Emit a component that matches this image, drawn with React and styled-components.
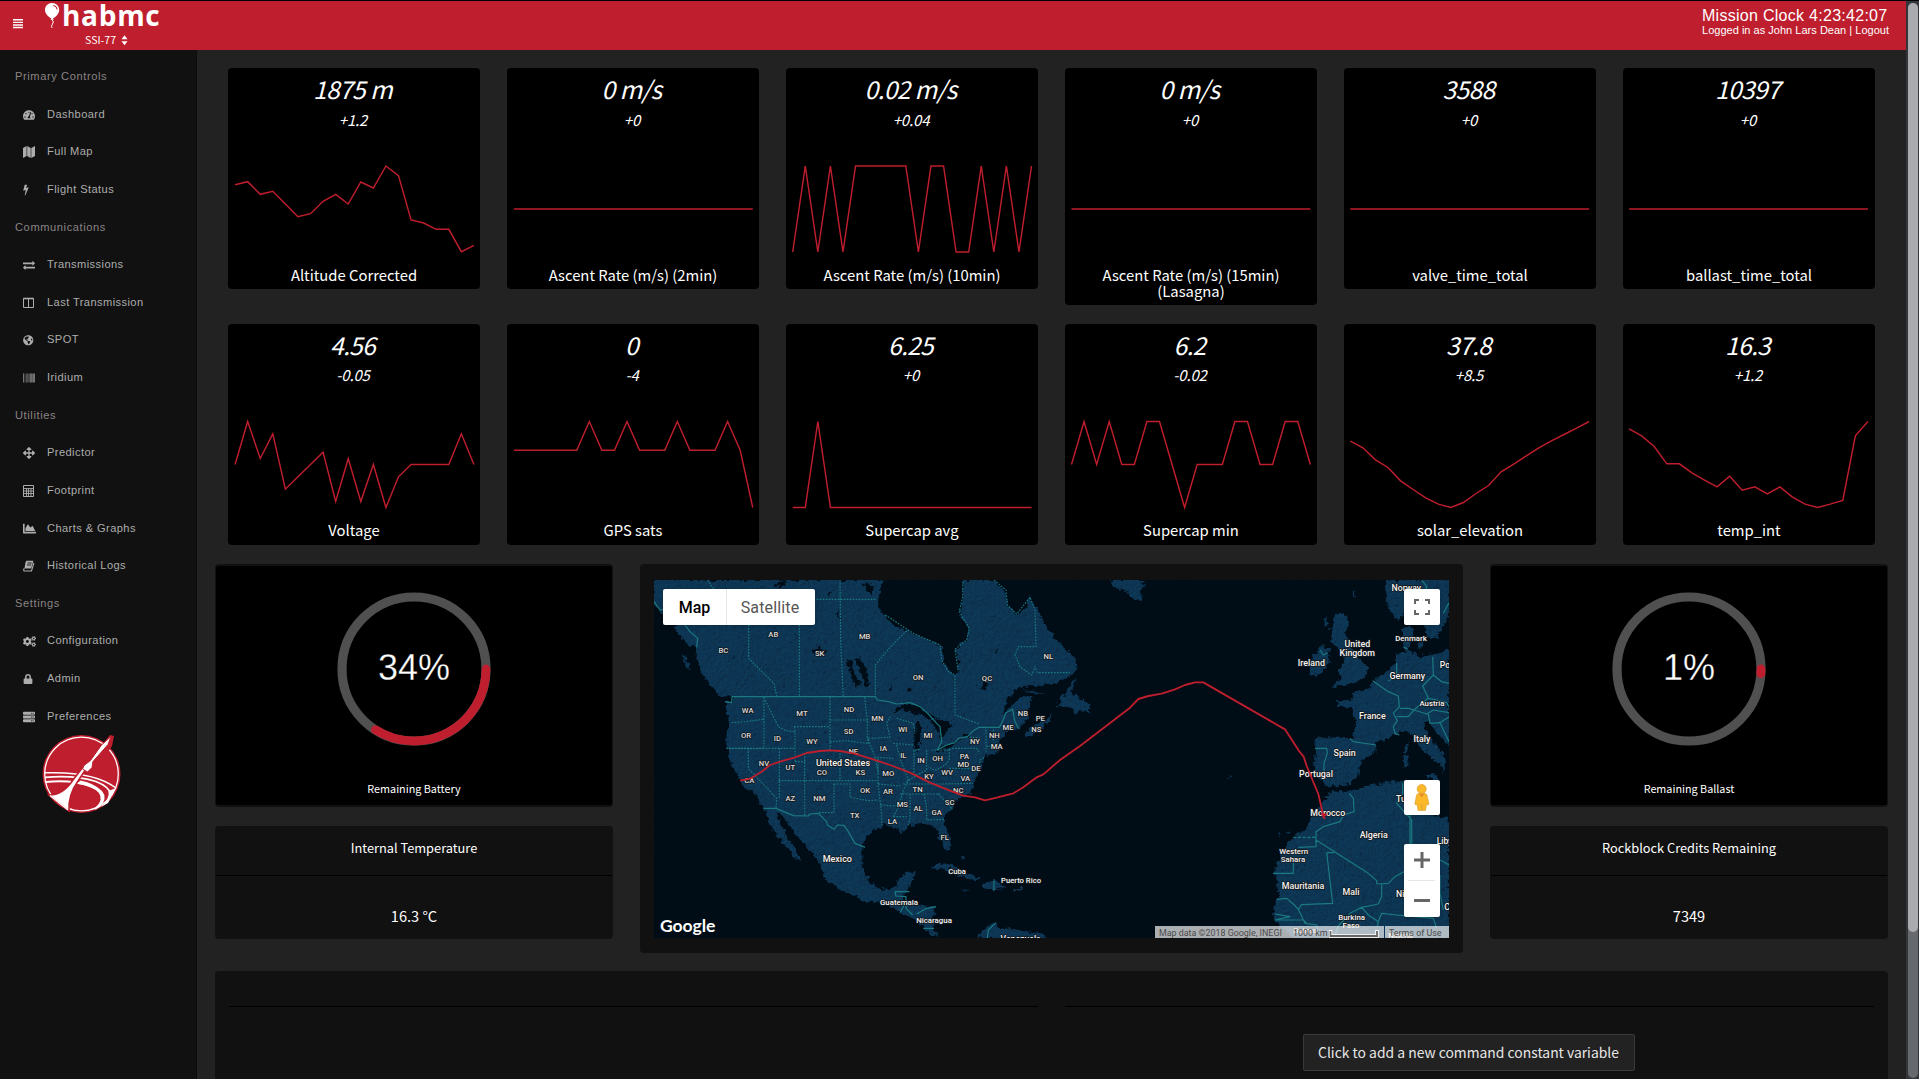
import React from "react";
import styled, { createGlobalStyle } from "styled-components";
import {
  FaTachometerAlt, FaGlobeAmericas, FaBarcode, FaArrowsAlt,
  FaChartArea, FaCogs, FaLock, FaServer,
} from "react-icons/fa";

const sourceSans = `"Noto Sans CJK SC", "Noto Sans", sans-serif`;
const arial = `"Liberation Sans", Arial, sans-serif`;
const red = "#be1e2d";

const GlobalStyle = createGlobalStyle`
  html, body { margin: 0; height: 100%; overflow: hidden; background: #222; }
  body { font-family: ${sourceSans}; color: #fff; }
  *, *::before, *::after { box-sizing: border-box; }
`;

/* ---------- shell ---------- */
const Page = styled.div`
  display: flex;
  height: 1079px;
  overflow: hidden;
  border-top: 1px solid #000;
`;
const Shell = styled.div`
  flex: 1;
  min-width: 0;
  display: flex;
  flex-direction: column;
`;
const ScrollTrack = styled.div`
  width: 13px;
  padding: 2px 1px 1px 2px;
  background: #33373b;
`;
const ScrollGroove = styled.div`
  height: 100%;
  border-radius: 5px;
  background: #66696d;
`;
const ScrollThumb = styled.div`
  height: 929px;
  border-radius: 5px;
  background: #aaabae;
`;
const Header = styled.header`
  height: 49px;
  flex: none;
  display: flex;
  align-items: flex-start;
  background: ${red};
`;
const MenuButton = styled.div`
  padding: 18px 0 0 13px;
  width: 45px;
  svg { display: block; }
`;
const Brand = styled.div`
  display: flex;
  flex-direction: column;
`;
const BrandRow = styled.div`
  display: flex;
  height: 30px;
`;
const BrandName = styled.div`
  margin-left: 1px;
  font: 700 28px/28px "Open Sans", sans-serif;
  letter-spacing: 0.7px;
`;
const Flight = styled.div`
  display: flex;
  align-items: center;
  gap: 5px;
  margin-left: 40px;
  font: 10.6px/18px ${sourceSans};
`;
const Session = styled.div`
  margin-left: auto;
  width: 204px;
  padding-top: 6px;
  font-family: ${arial};
`;
const Clock = styled.div`
  font-size: 16px;
  line-height: 18px;
  letter-spacing: 0.28px;
`;
const Login = styled.div`
  margin-top: -1px;
  font-size: 11px;
  line-height: 12px;
  letter-spacing: 0.02px;
`;
const Body = styled.div`
  flex: 1;
  min-height: 0;
  display: flex;
`;

/* ---------- sidebar ---------- */
const Sidebar = styled.nav`
  width: 197px;
  flex: none;
  padding-top: 8.1px;
  background: #111;
  border-right: 1px solid #0c0c0c;
  font: 11.1px/37.64px ${arial};
`;
const NavHeading = styled.div`
  height: 37.64px;
  padding-left: 15px;
  color: #8a8484;
  letter-spacing: 0.6px;
`;
const NavItem = styled.div`
  display: flex;
  align-items: center;
  height: 37.64px;
  padding-left: 23px;
  color: #adadad;
  letter-spacing: 0.42px;
`;
const NavIcon = styled.span`
  width: 24px;
  display: flex;
  svg { display: block; }
`;
const Emblem = styled.svg`
  display: block;
  margin: 0 0 0 42px;
`;

/* ---------- main ---------- */
const Main = styled.main`
  flex: 1;
  min-width: 0;
  padding: 18px 18px 0;
  overflow: hidden;
  background: #222;
`;
const StatGrid = styled.section`
  display: grid;
  grid-template-columns: repeat(6, 252px);
  column-gap: 27px;
  row-gap: 18.6px;
  align-items: start;
  margin: 0 13px;
`;
const StatCard = styled.article`
  padding: 6.2px 0 6.4px;
  border-radius: 4px;
  background: #000;
  text-align: center;
`;
const StatValue = styled.div`
  padding-right: 3px;
  font: italic 24.5px/30px ${sourceSans};
  letter-spacing: -0.6px;
`;
const StatDelta = styled.div`
  margin-top: 5.4px;
  padding-right: 2px;
  font: italic 15px/20px ${sourceSans};
  letter-spacing: -0.15px;
`;
const Spark = styled.svg`
  display: block;
  margin-bottom: 0.6px;
  polyline { fill: none; stroke: ${red}; stroke-width: 1.45; }
`;
const StatLabel = styled.div`
  padding: 0 20px;
  font: 14.8px/16px ${sourceSans};
`;
const MiddleRow = styled.section`
  display: grid;
  grid-template-columns: 398px 823px 398px;
  column-gap: 27px;
  align-items: start;
  margin-top: 19.4px;
`;
const Column = styled.div`
  display: flex;
  flex-direction: column;
  gap: 19px;
`;
const Panel = styled.div`
  border-radius: 4px;
  background: #111;
`;
const GaugePanel = styled(Panel)`
  height: 243px;
  padding: 2px 1px;
`;
const GaugeFace = styled.div`
  height: 239px;
  display: flex;
  flex-direction: column;
  align-items: center;
  padding-top: 23px;
  border-radius: 2px;
  background: #000;
  text-align: center;
  svg { display: block; }
`;
const GaugeCaption = styled.div`
  margin-top: 31px;
  font: 10.8px/16px ${sourceSans};
`;
const ReadoutPanel = styled(Panel)`
  height: 113px;
  text-align: center;
`;
const ReadoutTitle = styled.div`
  height: 50px;
  margin: 0 1px;
  padding-top: 10px;
  border-bottom: 1px solid #000;
  font: 12.8px/23px ${sourceSans};
`;
const ReadoutValue = styled.div`
  padding-top: 28px;
  font: 14.6px/24px ${sourceSans};
`;
const MapPanel = styled(Panel)`
  height: 389px;
  padding: 16px 14px;
`;
const CommandPanel = styled(Panel)`
  margin-top: 18px;
  height: 200px;
  padding: 35px 14px 0;
  display: grid;
  grid-template-columns: 1fr 1fr;
  column-gap: 27px;
`;
const CommandColumn = styled.div`
  border-top: 1px solid #000;
  padding: 27px 2px 0 0;
  display: flex;
  justify-content: center;
  align-items: flex-start;
`;
const CommandButton = styled.button`
  width: 332px;
  height: 37px;
  padding: 0;
  border: 1px solid #3a3a3a;
  border-radius: 2px;
  background: #222;
  color: #e6e6e6;
  font: 13.9px/34px ${sourceSans};
`;

/* ---------- map ---------- */
const MapFrame = styled.div`
  position: relative;
  height: 358px;
  overflow: hidden;
  background: #010e17;
  > svg { display: block; }
`;
const MapControl = styled.div`
  position: absolute;
  display: flex;
  background: #fff;
  border-radius: 2px;
  box-shadow: 0 1px 4px -1px rgba(0, 0, 0, 0.3);
`;
const TypeControl = styled(MapControl)`
  left: 9px;
  top: 9px;
  font: 16px/37px Roboto, sans-serif;
`;
const TypeButton = styled.div`
  width: ${(p) => p.$width}px;
  height: 36px;
  text-align: center;
  color: ${(p) => (p.$active ? "#000" : "#565656")};
  font-weight: ${(p) => (p.$active ? 500 : 400)};
  letter-spacing: ${(p) => (p.$active ? 0 : 0.15)}px;
  padding-right: ${(p) => (p.$active ? 0 : 2)}px;
  border-left: ${(p) => (p.$active ? "0" : "1px solid #e6e6e6")};
`;
const SideControl = styled(MapControl)`
  right: 9px;
  top: ${(p) => p.$top}px;
  width: 36px;
  height: ${(p) => p.$height}px;
`;
const GoogleMark = styled.div`
  position: absolute;
  left: 6px;
  bottom: 2px;
  color: #fff;
  font: 700 17.6px/20px Lato, sans-serif;
  letter-spacing: -0.1px;
`;
const Credits = styled.div`
  position: absolute;
  right: 0;
  bottom: 0;
  height: 12px;
  display: flex;
  color: #4a4a4a;
  font: 8.9px/15px Roboto, sans-serif;
  white-space: nowrap;
`;
const Credit = styled.div`
  width: ${(p) => p.$width}px;
  padding-left: 4px;
  display: flex;
  gap: 2px;
  background: rgba(245, 245, 245, 0.7);
  margin-left: ${(p) => p.$gap || 0}px;
`;

/* ---------- icons ---------- */
const Glyph = ({ d, box = "0 0 1792 1792", size = 12 }) => (
  <svg width={size} height={size} viewBox={box} fill="currentColor"><path d={d} /></svg>
);
const BoltIcon = () => (
  <svg width="6" height="12" viewBox="0 0 6 12" fill="currentColor">
    <path d="M1.700 .7H4.200L3.100 3.900L5.800 3.300L2.400 11.300H1.700L2.800 6.100L.2 6.700Z" />
  </svg>
);
const ExchangeIcon = () => <Glyph d="M1792 1184v192q0 13-9.500 22.500t-22.500 9.500h-1376v192q0 13-9.500 22.500t-22.500 9.500q-12 0-24-10l-319-320q-9-9-9-22 0-14 9-23l320-320q9-9 23-9 13 0 22.500 9.500t9.500 22.500v192h1376q13 0 22.500 9.500t9.500 22.500zm0-544q0 14-9 23l-320 320q-9 9-23 9-13 0-22.500-9.500t-9.500-22.500v-192h-1376q-13 0-22.500-9.500t-9.500-22.500v-192q0-13 9.500-22.500t22.500-9.500h1376v-192q0-14 9-23t23-9q12 0 24 10l319 319q9 9 9 23z" />;
const MapIcon = () => (
  <svg width="12" height="12" viewBox="0 0 12 12" fill="currentColor">
    <path d="M0 2L3.600 0V10L0 12zM4.200 0L7.700 1.900V12L4.200 10.100zM8.300 2L12 0V10L8.300 12z" />
  </svg>
);
const ColumnsIcon = () => (
  <svg width="12" height="12" viewBox="0 0 12 12" fill="none" stroke="currentColor">
    <path d="M.5 1.500H10.500V10.500H.5zM5.500 2V10.500" /><path d="M.5 1.500H10.500" strokeWidth="1.600" />
  </svg>
);
const CalculatorIcon = () => (
  <svg width="12" height="12" viewBox="0 0 12 12" fill="none" stroke="currentColor">
    <path d="M.5 .5H10.500V11.500H.5z" /><path d="M1 3.500H10M1 6H10M1 8.500H10M3.500 4V11M5.500 4V11M8 4V11" strokeWidth=".9" />
  </svg>
);
const BookIcon = () => (
  <svg width="12" height="12" viewBox="0 0 12 12">
    <path d="M3.400 .8H10.400L8.200 8.600H1.400L2.600 2.200z" fill="currentColor" />
    <path d="M1.300 8.300Q-.1 10.800 1.500 11H8.500L10.900 3" fill="none" stroke="currentColor" strokeWidth="1.100" />
    <path d="M4.500 3H8.700M4 5H8.200" stroke="#111" strokeWidth=".9" />
  </svg>
);

const nav = [
  ["Primary Controls"],
  ["Dashboard", <FaTachometerAlt size={12} />],
  ["Full Map", <MapIcon />],
  ["Flight Status", <BoltIcon />],
  ["Communications"],
  ["Transmissions", <ExchangeIcon />],
  ["Last Transmission", <ColumnsIcon />],
  ["SPOT", <FaGlobeAmericas size={10.500} />],
  ["Iridium", <FaBarcode size={12} />],
  ["Utilities"],
  ["Predictor", <FaArrowsAlt size={12} />],
  ["Footprint", <CalculatorIcon />],
  ["Charts & Graphs", <FaChartArea size={13} />],
  ["Historical Logs", <BookIcon />],
  ["Settings"],
  ["Configuration", <FaCogs size={13} />],
  ["Admin", <FaLock size={10} />],
  ["Preferences", <FaServer size={12} />],
];

/* ---------- stats ---------- */
const flat = Array(20).fill(129);
const stats = [
  ["1875 m", "+1.2", "Altitude Corrected", [56, 47, 85, 76, 114, 152, 143, 106, 85, 114, 48, 66, 0, 29, 162, 171, 190, 190, 257, 238]],
  ["0 m/s", "+0", "Ascent Rate (m/s) (2min)", flat],
  ["0.02 m/s", "+0.04", "Ascent Rate (m/s) (10min)", [258, 0, 258, 0, 258, 0, 0, 0, 0, 0, 258, 0, 0, 258, 258, 0, 258, 0, 258, 0]],
  ["0 m/s", "+0", "Ascent Rate (m/s) (15min) (Lasagna)", flat],
  ["3588", "+0", "valve_time_total", flat],
  ["10397", "+0", "ballast_time_total", flat],
  ["4.56", "-0.05", "Voltage", [129, 0, 111, 37, 203, 166, 129, 92, 240, 111, 240, 129, 258, 166, 129, 129, 129, 129, 37, 129]],
  ["0", "-4", "GPS sats", [86, 86, 86, 86, 86, 86, 0, 86, 86, 0, 86, 86, 86, 0, 86, 86, 86, 0, 86, 258]],
  ["6.25", "+0", "Supercap avg", [258, 258, 0, ...Array(17).fill(258)]],
  ["6.2", "-0.02", "Supercap min", [129, 0, 129, 0, 129, 129, 0, 0, 129, 258, 129, 129, 129, 0, 0, 129, 129, 0, 0, 129]],
  ["37.8", "+8.5", "solar_elevation", [59, 79, 115, 138, 178, 204, 229, 248, 258, 243, 216, 192, 151, 128, 103, 79, 58, 39, 20, 0]],
  ["16.3", "+1.2", "temp_int", [22, 43, 75, 127, 127, 154, 176, 196, 164, 206, 196, 217, 196, 227, 248, 258, 248, 237, 43, 0]],
];

const Sparkline = ({ data, top, left }) => (
  <Spark width="252" height="136.400">
    <polyline points={data.map((v, i) => `${(left + i * 12.570).toFixed(2)},${(top + v / 3).toFixed(2)}`).join(" ")} />
  </Spark>
);

const Gauge = ({ percent }) => {
  const r = 72;
  const a = (percent / 100) * 2 * Math.PI;
  return (
    <svg width="160" height="160" viewBox="-80 -80 160 160">
      <circle r={r} fill="none" stroke="#505050" strokeWidth="9.200" />
      <path
        d={`M${r} 0A${r} ${r} 0 0 1 ${r * Math.cos(a)} ${r * Math.sin(a)}`}
        fill="none" stroke={red} strokeWidth="8.800" strokeLinecap="round"
      />
      <text
        y="10.500" textAnchor="middle" fill="#fff" stroke="#000" strokeWidth=".3"
        fontFamily="Liberation Sans, Arial, sans-serif" fontSize="36"
      >{percent}%</text>
    </svg>
  );
};

/* ---------- map artwork ---------- */
const americas = [
  "M72 60V135L100 160L125 185L148 225L170 250L197 262L203 300L215 340L235 368L265 382L285 400L308 412L305 426L287 425L296 470L290 520L288 562L302 612L325 650L345 685L375 702L395 735L405 750L420 795L440 830L470 862L490 890L512 908L505 882L482 848L455 800L438 755L462 770L480 800L512 842L545 880L578 922L580 952L620 985L670 1008L715 1027L745 1024L785 1043L830 1065L862 1082L880 1100L900 1120L925 1134L912 1108L908 1080L918 1040L880 1035L850 1032L825 1028L818 1008L838 990L845 970L858 936L822 940L805 955L798 980L765 990L735 980L710 950L697 910L697 862L706 830L735 806L765 797L795 801L815 815L835 800L865 790L905 795L924 815L932 845L950 872L962 868L960 838L945 795L945 770L965 745L990 715L1025 700L1030 670L1045 640L1056 612L1066 588L1100 576L1110 560L1103 543L1117 528L1134 512L1166 508L1190 478L1200 440L1205 412L1180 405L1150 430L1115 465L1135 415L1165 382L1262 374L1320 352L1340 330L1336 298L1310 268L1272 235L1245 190L1220 150L1200 108L1185 150L1160 165L1135 140L1122 92L1090 60H998L1000 110L990 160L1018 212L1010 242L975 266L985 295L985 332L975 346L962 340L940 305L935 260L880 235L830 210L790 200L765 165L745 150L745 110L760 60Z",
  "M1282 438L1300 405L1338 348L1325 400L1350 415L1375 430L1384 462L1362 450L1340 460L1320 442Z",
  "M1185 528L1200 505L1245 480L1268 462L1262 485L1225 510L1195 530Z",
  "M1175 388L1215 392L1245 402L1210 400Z",
  "M900 925L930 910L970 915L1010 940L1048 955L1040 961L1000 955L960 928Z",
  "M1062 967L1095 962L1130 983L1090 987L1062 988Z",
  "M993 988L1022 990L1005 995ZM1150 987H1178V992H1150ZM990 880L1002 895L998 900Z",
  "M1040 1134L1060 1108L1095 1088L1112 1108L1150 1104L1200 1115L1235 1122L1260 1134Z",
  "M155 285L165 290L185 332L172 322Z",
  "M235 368L262 378L296 408L282 410L255 392Z",
];
const europe = [
  "M147 60L170 85L200 95L222 118L240 122L243 92L255 60Z",
  "M822 165L850 160L868 187L855 222L872 262L895 290L925 322L918 350L880 368L815 385L845 355L832 332L855 305L835 265L810 240L815 200Z",
  "M778 256L810 265L805 312L785 340L745 348L750 315L755 287L775 280Z",
  "M975 60L977 112L990 152L1012 178L1050 152L1068 165L1090 192L1102 232L1130 235L1150 195L1167 170V60Z",
  "M1028 205L1062 198L1058 238L1042 268L1080 292L1130 280L1167 266V560L1150 540L1120 502L1110 485L1088 490L1100 520L1130 558L1160 600L1150 642L1140 612L1112 590L1080 560L1060 530L1040 512L1005 522L960 545L948 552L950 572L905 602L895 642L870 672L810 682L770 652L762 620L768 575L762 538L800 532L880 535L885 480L872 445L835 435L830 420L878 420L875 400L930 385L940 360L985 335L1005 310L1010 280L1036 275Z",
  "M815 690L870 697L930 675L1030 662L1046 668L1036 702L1060 750L1110 765L1167 775V1134H700L645 1085L640 1045L655 1010L650 960L640 940L660 890L690 840L745 800L755 770L785 730L800 710Z",
  "M1092 645L1135 642L1128 662ZM1038 548L1046 552L1042 578L1032 572ZM1028 590L1046 585L1045 620L1030 622Z",
  "M1070 250L1090 245L1088 265L1072 262Z",
  "M790 190L800 168L804 175L795 205ZM878 95L884 100L880 115ZM505 645H513V650H505ZM655 822L662 820L660 826ZM680 818L690 812L685 822Z",
];
const lakes = [
  "M785 462L805 438L838 428L872 440L905 468L930 474L905 480L860 462L815 450Z",
  "M852 565L856 500L866 485L874 500L870 545L864 572Z",
  "M905 484L930 478L955 482L966 505L950 515L935 540L925 520Z",
  "M918 572L950 552L988 540L970 556L935 575ZM985 530L1015 524L1022 530L990 538Z",
  "M648 302L660 300L668 325L690 375L680 380L660 340ZM675 295L690 292L712 330L716 375L705 378L695 345Z",
  "M700 72L720 68L735 80L725 100L710 90ZM430 75L460 62L470 68L445 82ZM550 268L570 258L590 275L570 292L552 285ZM775 385L785 380L782 395ZM830 388L842 382L840 398Z",
  "M1048 390L1060 370L1075 365L1068 385ZM1090 275L1105 268L1100 282ZM590 100L602 92L600 108ZM616 160L628 150L626 175Z",
];
const solidWest =
  "M72 125L90 150L105 148M165 195L180 215L203 235L200 262M285 425L305 428L306 410H736L742 420L775 425L800 432L840 428L870 440L895 462L918 488L930 500L935 545L922 570L950 555L975 548L985 535L1012 530L1030 512L1048 502H1108L1115 490L1128 458L1148 448L1154 482L1166 506M400 745L438 745L490 767L535 768L540 762L565 760L590 785L592 795L612 808L622 795L642 796L655 815L675 850L705 862M795 995H838M795 995L798 1008L828 1010V1045L848 1065M825 1030L810 1058M860 1062L890 1045L918 1040M880 1105H912M1092 962V992M1098 1088L1075 1110L1072 1134";
const dashWest =
  "M630 60L632 240L640 408M560 118H742M508 195V408M356 195V295L395 335L432 370L440 408M830 212L780 262L736 315V405M766 165L850 220L930 255L935 300L955 335L975 345V465L1048 492M998 65V110L988 155L1018 205L1010 240L975 268L985 335M1092 60L1128 90L1132 135L1160 162L1200 112L1215 150L1218 260H1165L1155 285L1170 320L1205 345L1215 320L1222 338H1320M232 60L260 100L310 150M402 412V485M402 412L415 440L445 500L468 512L495 515M305 488L345 485L400 478M402 485V565H290M290 565H492M495 500V605M492 500H600M600 412V572M704 412L712 480V530L716 555M600 480H712M600 545L650 542L712 550M524 580V662M495 605H524M355 565V625L440 715L438 745M448 565V715M446 662H744M630 580V662M524 662V768M612 672V758H565M612 672H660V712L715 722L745 720M744 595V672L752 735L756 795M716 535L780 532L770 490L780 470M712 530L735 592L790 595M735 592L745 640M800 475L850 490L855 520M790 550L852 555M800 555L812 600L835 660L820 690L806 740L790 770M852 570V640M890 570V630L860 645L830 665M905 570H960M958 568V600L945 615L915 632L895 620M958 568L975 565H1040L1050 580M958 625H1050V600L1066 590M820 672H935L1030 670M810 702H930M840 702V775L835 795M882 702L890 745V780L945 778M925 702L965 745M745 672L812 678M752 735L800 738M790 770H830M1010 530L1055 535M1068 500V575M1090 500V545M1070 560L1100 555M855 570L870 568";
const solidEast =
  "M765 565H800L802 580L792 610V640M870 535L880 545L948 555M938 362L985 395L1015 408L1018 440L1000 460L1012 482L1000 500L1005 520L1018 525M1010 308V350L985 362M1118 290L1120 345L1088 378L1105 415L1085 430L1062 450L1045 445L1020 445M1120 345L1145 365L1167 370M1105 415L1130 420L1160 428L1167 440M1010 470L1045 470L1062 450L1100 462L1120 450L1167 458M1105 462L1110 490L1140 488L1167 545M1140 488L1167 470M780 270L790 285L803 278M1032 262L1042 266M1085 60L1100 80L1095 110M1167 128L1150 160M868 700L880 715L882 755L850 765L840 785L790 800L768 815V860L715 862M700 905V940H640M768 840L925 940L950 962V972M800 878H822M800 878L818 1030L725 1034L715 1048L700 1032L680 1015L650 1018M950 972L985 970L1005 950L1050 925M965 972V1010L955 1032L905 1042L870 1060L835 1098L825 1125M905 1042L925 1065L955 1085L952 1100M955 1085L965 1060L1010 1065L1065 1070L1120 1075L1130 1105M1028 670V700L1010 730L1055 780V850M1050 750V850L1062 870M1140 945V1000L1150 1050M1140 900L1167 915M645 1062L690 1070L645 1080H730L740 1090M715 1048L735 1090L770 1095L775 1130";
const route =
  "M330 662L360 656L395 635L420 615L460 602L495 592L530 579L570 573L600 571L630 573L670 580L720 595L780 615L840 638L900 668L960 692L1000 707L1035 712L1065 721L1100 713L1150 700L1180 682L1220 652L1240 643L1290 600L1350 558L1500 443L1525 417L1555 408L1595 401L1635 388L1665 375L1695 367L1720 367L1965 508L2007 573L2021 590L2030 618L2065 702L2077 755L2083 775L2076 762L2090 765";

const stateLabels = [
  ["AB", 430, 230], ["MB", 704, 237], ["BC", 280, 280], ["SK", 569, 289], ["ON", 864, 359], ["QC", 1071, 364], ["NL", 1255, 296],
  ["WA", 353, 459], ["MT", 516, 467], ["ND", 657, 456], ["MN", 742, 482], ["NB", 1179, 467], ["PE", 1231, 482], ["NS", 1219, 515],
  ["ME", 1134, 510], ["NH", 1093, 534], ["MA", 1100, 566], ["NY", 1035, 553], ["WI", 818, 515], ["MI", 894, 534], ["OR", 348, 534],
  ["ID", 442, 542], ["SD", 656, 521], ["WY", 546, 553], ["IA", 760, 572], ["NE", 670, 581], ["IL", 820, 594], ["IN", 873, 609],
  ["OH", 923, 602], ["PA", 1003, 596], ["MD", 1000, 620], ["DE", 1038, 633], ["NV", 402, 617], ["UT", 481, 631], ["CO", 576, 644],
  ["KS", 691, 644], ["MO", 775, 647], ["KY", 897, 658], ["WV", 951, 644], ["VA", 1006, 663], ["CA", 358, 669], ["AZ", 481, 722],
  ["NM", 568, 722], ["OK", 705, 700], ["AR", 774, 703], ["TN", 863, 695], ["NC", 985, 698], ["SC", 959, 735], ["MS", 817, 741],
  ["AL", 864, 752], ["GA", 920, 765], ["TX", 674, 773], ["LA", 787, 792], ["FL", 944, 840],
];
const countryLabels = [
  ["United States", 639, 618, 27], ["Mexico", 622, 906, 27], ["Cuba", 981, 942, 23], ["Puerto Rico", 1173, 969, 23],
  ["Guatemala", 807, 1034, 23.500], ["Nicaragua", 912, 1090, 23.500], ["Venezuela", 1172, 1146, 26],
  ["Norway", 2329, 93, 26], ["Denmark", 2343, 242, 23.500], ["United", 2182, 260, 26.500], ["Kingdom", 2182, 287, 26.500], ["Ireland", 2044, 319, 26.500],
  ["Germany", 2332, 357, 26.500], ["Austria", 2406, 437, 23.500], ["France", 2227, 476, 26.500], ["Italy", 2376, 546, 26.500], ["Spain", 2144, 589, 26.500],
  ["Portugal", 2058, 650, 26.500], ["Morocco", 2093, 769, 26.500], ["Algeria", 2231, 834, 26.500], ["Western", 1991, 881, 23.500], ["Sahara", 1989, 905, 23.500],
  ["Mauritania", 2019, 986, 26.500], ["Mali", 2163, 1005, 26.500], ["Burkina", 2165, 1079, 23.500], ["Faso", 2163, 1103, 23.500], ["Guinea", 2025, 1120, 23],
  ["Nigeria", 2312, 1133, 23],
];
const edgeLabels = [["Poland", 2429, 325], ["Tunisia", 2298, 725], ["Libya", 2420, 852], ["Niger", 2298, 1010], ["Chad", 2443, 1050]];

const WorldMap = () => (
  <svg width="795" height="358" viewBox="72 60 2385 1074">
    <defs>
      <filter id="relief" x="0" y="0" width="100%" height="100%">
        <feTurbulence type="fractalNoise" baseFrequency="0.13" numOctaves="3" seed="7" result="n" />
        <feDiffuseLighting in="n" surfaceScale="5" lightingColor="#2a6690" diffuseConstant="1">
          <feDistantLight azimuth="225" elevation="42" />
        </feDiffuseLighting>
      </filter>
      <filter id="coast" x="0" y="0" width="100%" height="100%">
        <feTurbulence type="fractalNoise" baseFrequency="0.07" numOctaves="2" seed="3" result="n" />
        <feDisplacementMap in="SourceGraphic" in2="n" scale="22" xChannelSelector="R" yChannelSelector="G" />
      </filter>
      <clipPath id="land">
        {americas.map((d) => <path key={d} d={d} />)}
        {europe.map((d) => <path key={d} d={d} transform="translate(1290 0)" />)}
      </clipPath>
    </defs>
    <rect x="72" y="60" width="2385" height="1074" fill="#010e17" />
    <g filter="url(#coast)">
      <rect x="72" y="60" width="2385" height="1074" fill="#010e17" />
      <g clipPath="url(#land)">
        <rect x="72" y="60" width="2385" height="1074" fill="#062c48" />
        <rect x="72" y="60" width="2385" height="1074" filter="url(#relief)" opacity="0.25" />
      </g>
      <g fill="#010e17">{lakes.map((d) => <path key={d} d={d} />)}</g>
    </g>
    <g fill="none" stroke="#1b7980" strokeWidth="3.600" strokeLinejoin="round">
      <path d={solidWest} />
      <path d={solidEast} transform="translate(1290 0)" />
      <path d="M700 832H768" strokeDasharray="9 5" transform="translate(1290 0)" />
      <path d={dashWest} strokeDasharray="5 4" strokeWidth="3.400" />
    </g>
    <g
      fill="#f4f4f4" stroke="#14191d" strokeWidth="5" strokeLinejoin="round" paintOrder="stroke"
      fontFamily="Roboto, sans-serif" fontWeight="500" textAnchor="middle"
    >
      {stateLabels.map(([t, x, y]) => <text key={t} x={x} y={y} fontSize="23" fill="#dadada">{t}</text>)}
      {countryLabels.map(([t, x, y, s]) => <text key={t} x={x} y={y} fontSize={s}>{t}</text>)}
      {edgeLabels.map(([t, x, y]) => <text key={t} x={x} y={y} fontSize="26" textAnchor="start">{t}</text>)}
    </g>
    <path d={route} fill="none" stroke={red} strokeWidth="5.500" strokeLinejoin="round" />
  </svg>
);

const Pegman = () => (
  <svg width="36" height="35" viewBox="0 0 36 35">
    <path d="M12.500 15Q13 13.600 15 13.600H20.500Q22.500 13.600 23 15L25 24Q24 25.500 22.500 24.500L21.500 30.500H14L13 24.500Q11.500 25.500 10.800 24Z" fill="#fbb829" stroke="#c9962f" strokeWidth=".5" />
    <path d="M14.800 13.600H20.700L17.800 17.500Z" fill="#e5892b" />
    <circle cx="17.700" cy="9" r="4.500" fill="#fbb829" stroke="#e0a030" strokeWidth=".7" />
    <path d="M17.800 24V30.500" stroke="#e0a030" strokeWidth=".8" />
  </svg>
);

const FlightMap = () => (
  <MapFrame>
    <WorldMap />
    <TypeControl>
      <TypeButton $width={63} $active>Map</TypeButton>
      <TypeButton $width={89}>Satellite</TypeButton>
    </TypeControl>
    <SideControl $top={9} $height={36}>
      <svg width="36" height="36" fill="none" stroke="#666" strokeWidth="2">
        <path d="M11 15V11H15M21 11H25V15M25 21V25H21M15 25H11V21" />
      </svg>
    </SideControl>
    <SideControl $top={200} $height={35}><Pegman /></SideControl>
    <SideControl $top={264} $height={73}>
      <svg width="36" height="73">
        <path d="M10 16H26M18 8V24M10 56.500H26" stroke="#666" strokeWidth="3" />
        <path d="M4 36.500H31" stroke="#e6e6e6" />
      </svg>
    </SideControl>
    <GoogleMark>Google</GoogleMark>
    <Credits>
      <Credit $width={134}>Map data ©2018 Google, INEGI</Credit>
      <Credit $width={95}>
        1000 km
        <svg width="50" height="12" fill="none">
          <path d="M1.500 4V10H48V4" stroke="#fff" strokeWidth="3.500" />
          <path d="M1.500 5V10H48V5" stroke="#666" strokeWidth="1.800" />
        </svg>
      </Credit>
      <Credit $width={64} $gap={1}>Terms of Use</Credit>
    </Credits>
  </MapFrame>
);

const Logo = () => (
  <svg width="16" height="30" viewBox="0 0 16 30">
    <path d="M7 2C11.200 2 14.200 5 14.200 9C14.200 12.500 11 16 8 17.500L8.800 18.800H5.600L6.300 17.400C3 15.800 0 12.300 0 9C0 5 3 2 7 2Z" fill="#fff" />
    <path d="M7 18.500Q9.500 21 7.300 23.500Q5.500 25.500 7.300 27" fill="none" stroke="#fff" strokeWidth="1" />
    <path d="M8.300 4.500Q11.500 5 12.200 8.500" fill="none" stroke={red} strokeWidth="1.100" />
  </svg>
);

const SsiEmblem = () => (
  <Emblem width="80" height="80" viewBox="0 0 80 80">
    <circle cx="39.500" cy="39" r="39" fill={red} />
    <circle cx="39.500" cy="39" r="36.800" fill="none" stroke="#fff" strokeWidth="1.300" />
    <path d="M58 12L68 0L72 1L70 11L64 20Z" fill={red} />
    <g fill="none" stroke="#fff">
      <path d="M3 37.800Q52 36 74 53" strokeWidth="1.500" />
      <path d="M3 42.300Q34 40 54 46.500Q68 52 69 60" strokeWidth="1.800" />
      <path d="M3.500 47Q30 44.500 48 51Q61 56 59.500 65Q58.500 70 53 74" strokeWidth="2" />
    </g>
    <path d="M74 53L66 68L59 72Q68 63 66.500 56Z" fill="#fff" />
    <path d="M36 49Q60 53 60 64Q59 71 49 75L58 72Q66 63 60 56Q52 48 38 45.500Z" fill="#fff" />
    <path d="M44 34L36 46Q26 60 27 76L7 60Q21 60 31 45L41 32Z" fill="#fff" stroke={red} strokeWidth="1.600" />
    <path d="M8 60.500L26 75" stroke="#fff" strokeWidth="1.300" />
    <path d="M69 1.500L59.500 10L48.500 25.500L42 30.500L40.500 34L45.500 37L50 32.500L51 26.500L66 9.500Z" fill="#fff" stroke={red} strokeWidth="1" />
  </Emblem>
);

export default function App() {
  return (
    <>
      <GlobalStyle />
      <Page>
        <Shell>
          <Header>
            <MenuButton>
              <svg width="10" height="10" fill="#fff">
                <path d="M0 0H10V1.500H0zM0 2.700H10V4.100H0zM0 5.300H10V6.700H0zM0 7.800H10V9.200H0z" />
              </svg>
            </MenuButton>
            <Brand>
              <BrandRow><Logo /><BrandName>habmc</BrandName></BrandRow>
              <Flight>
                SSI-77
                <svg width="7" height="11" fill="#fff"><path d="M3.500 .3L6.500 4.300H.5zM3.500 10.200L.5 6.300H6.500z" /></svg>
              </Flight>
            </Brand>
            <Session>
              <Clock>Mission Clock 4:23:42:07</Clock>
              <Login>Logged in as John Lars Dean | Logout</Login>
            </Session>
          </Header>
          <Body>
            <Sidebar>
              {nav.map(([label, icon]) =>
                icon
                  ? <NavItem key={label}><NavIcon>{icon}</NavIcon>{label}</NavItem>
                  : <NavHeading key={label}>{label}</NavHeading>
              )}
              <SsiEmblem />
            </Sidebar>
            <Main>
              <StatGrid>
                {stats.map(([value, delta, label, data], i) => (
                  <StatCard key={label}>
                    <StatValue>{value}</StatValue>
                    <StatDelta>{delta}</StatDelta>
                    <Sparkline data={data} top={i < 6 ? 36 : 36.500} left={7.100 - (i % 6) * 0.200} />
                    <StatLabel>{label}</StatLabel>
                  </StatCard>
                ))}
              </StatGrid>
              <MiddleRow>
                <Column>
                  <GaugePanel><GaugeFace><Gauge percent={34} /><GaugeCaption>Remaining Battery</GaugeCaption></GaugeFace></GaugePanel>
                  <ReadoutPanel><ReadoutTitle>Internal Temperature</ReadoutTitle><ReadoutValue>16.3 °C</ReadoutValue></ReadoutPanel>
                </Column>
                <MapPanel><FlightMap /></MapPanel>
                <Column>
                  <GaugePanel><GaugeFace><Gauge percent={1} /><GaugeCaption>Remaining Ballast</GaugeCaption></GaugeFace></GaugePanel>
                  <ReadoutPanel><ReadoutTitle>Rockblock Credits Remaining</ReadoutTitle><ReadoutValue>7349</ReadoutValue></ReadoutPanel>
                </Column>
              </MiddleRow>
              <CommandPanel>
                <CommandColumn />
                <CommandColumn><CommandButton>Click to add a new command constant variable</CommandButton></CommandColumn>
              </CommandPanel>
            </Main>
          </Body>
        </Shell>
        <ScrollTrack><ScrollGroove><ScrollThumb /></ScrollGroove></ScrollTrack>
      </Page>
    </>
  );
}
